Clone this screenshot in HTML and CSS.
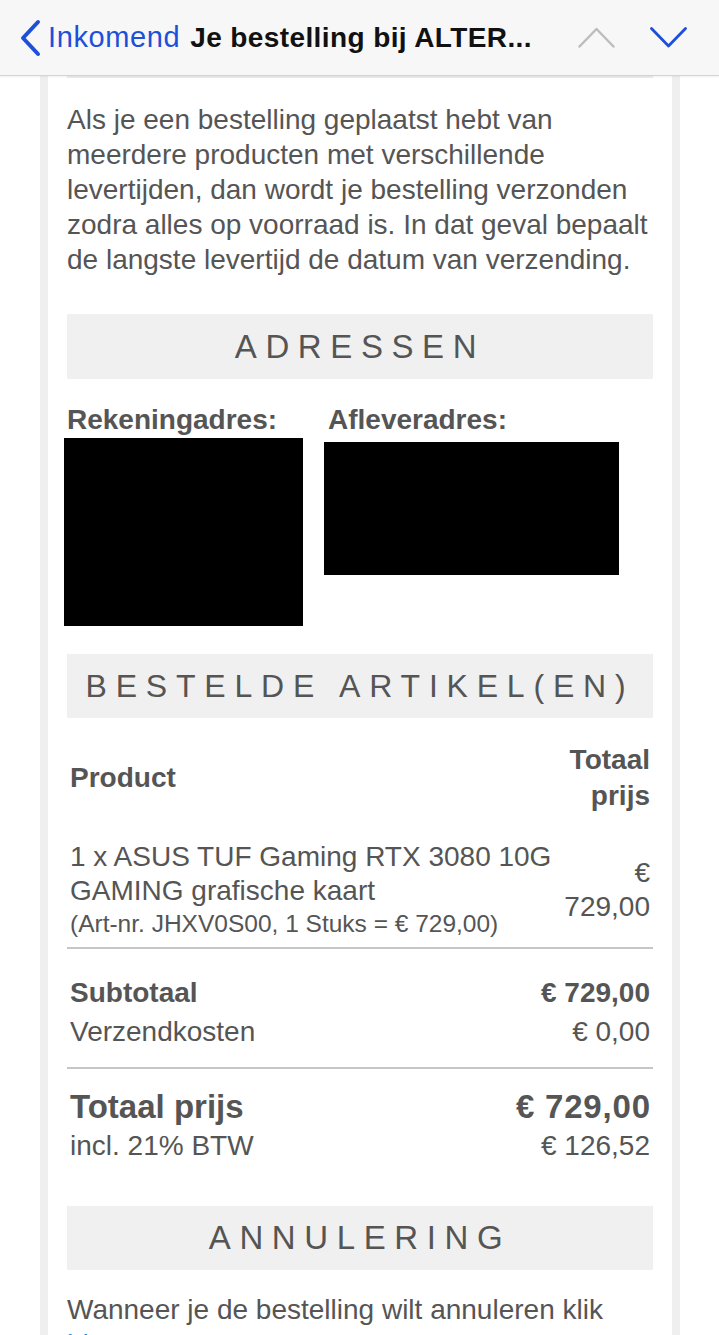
FILE: index.html
```html
<!DOCTYPE html>
<html lang="nl">
<head>
<meta charset="utf-8">
<title>Je bestelling bij ALTERNATE</title>
<link rel="stylesheet" href="styles.css">
</head>
<body>
<header class="topbar">
  <svg class="back-icon" width="24" height="38" viewBox="0 0 24 38" aria-hidden="true">
    <polyline points="20,3 5,19 20,35" fill="none" stroke="#1d50d9" stroke-width="4" stroke-linecap="round" stroke-linejoin="round"/>
  </svg>
  <span class="back-label">Inkomend</span>
  <span class="title">Je bestelling bij ALTER...</span>
  <nav class="nav-arrows">
    <svg width="37" height="21" viewBox="0 0 37 21" aria-hidden="true">
      <polyline points="1.5,19.5 18.5,2 35.5,19.5" fill="none" stroke="#bdbdbd" stroke-width="2.5" stroke-linecap="round" stroke-linejoin="round"/>
    </svg>
    <svg width="37" height="21" viewBox="0 0 37 21" aria-hidden="true">
      <polyline points="1.5,1.5 18.5,19 35.5,1.5" fill="none" stroke="#1d50d9" stroke-width="2.8" stroke-linecap="round" stroke-linejoin="round"/>
    </svg>
  </nav>
</header>

<main class="page">
  <div class="mail">
    <div class="content">
      <div class="top-rule"></div>
      <p class="text intro">Als je een bestelling geplaatst hebt van meerdere producten met verschillende levertijden, dan wordt je bestelling verzonden zodra alles op voorraad is. In dat geval bepaalt de langste levertijd de datum van verzending.</p>

      <h2 class="section-title adressen">ADRESSEN</h2>

      <div class="addresses">
        <div class="address-col">
          <div class="address-label">Rekeningadres:</div>
          <div class="redacted redacted-billing"></div>
        </div>
        <div class="address-col">
          <div class="address-label">Afleveradres:</div>
          <div class="redacted redacted-shipping"></div>
        </div>
      </div>

      <h2 class="section-title artikelen">BESTELDE ARTIKEL(EN)</h2>

      <div class="products">
        <div class="th th-product">Product</div>
        <div class="th th-price">Totaal prijs</div>
        <div class="item-desc">
          <div class="item-name">1 x ASUS TUF Gaming RTX 3080 10G GAMING grafische kaart</div>
          <div class="item-meta">(Art-nr. JHXV0S00, 1 Stuks = € 729,00)</div>
        </div>
        <div class="item-price">€ 729,00</div>
      </div>

      <div class="rule"></div>

      <div class="totals">
        <div class="total-row strong"><span>Subtotaal</span><span>€ 729,00</span></div>
        <div class="total-row"><span>Verzendkosten</span><span>€ 0,00</span></div>
      </div>

      <div class="rule rule-2"></div>

      <div class="grand">
        <div class="grand-row"><span>Totaal prijs</span><span class="grand-amount">€ 729,00</span></div>
        <div class="vat-row"><span>incl. 21% BTW</span><span>€ 126,52</span></div>
      </div>

      <h2 class="section-title annulering">ANNULERING</h2>

      <p class="text cancel">Wanneer je de bestelling wilt annuleren klik <a class="link" href="#">hier</a>.</p>
    </div>
  </div>
</main>
</body>
</html>
```

FILE: styles.css
```css
html, body {
  margin: 0;
  padding: 0;
  background: #ffffff;
}

body {
  font-family: "Liberation Sans", Arial, Helvetica, sans-serif;
  color: #555555;
  overflow: hidden;
}

/* ---------- top bar ---------- */
.topbar {
  height: 76px;
  box-sizing: border-box;
  display: flex;
  align-items: center;
  padding: 0 32px 0 18px;
  background: #f7f7f7;
  border-bottom: 1px solid #d4d4d4;
  box-shadow: 0 1px 2px rgba(0, 0, 0, 0.06);
  position: relative;
  z-index: 2;
}

.back-icon {
  flex: none;
}

.back-label {
  margin-left: 6px;
  font-size: 29px;
  letter-spacing: 0.6px;
  color: #1d50d9;
}

.title {
  margin-left: 10px;
  font-size: 28px;
  font-weight: bold;
  letter-spacing: 0.4px;
  color: #111111;
  white-space: nowrap;
}

.nav-arrows {
  margin-left: auto;
  display: flex;
  align-items: center;
  gap: 35px;
}

.nav-arrows svg {
  display: block;
}

/* ---------- page ---------- */
.page {
  padding: 0 39px 0 40px;
}

.mail {
  border-left: 8px solid #efefef;
  border-right: 8px solid #efefef;
  min-height: 1300px;
}

.content {
  padding: 0 19px;
}

.top-rule {
  height: 2px;
  background: #ececec;
}

.text {
  margin: 0;
  font-size: 28px;
  line-height: 35px;
  color: #555555;
}

.intro {
  margin-top: 24px;
}

.section-title {
  margin: 0;
  height: 65px;
  display: flex;
  align-items: center;
  justify-content: center;
  background: #f0f0f0;
  font-size: 33px;
  font-weight: normal;
  letter-spacing: 8.6px;
  color: #555555;
}

.adressen {
  margin-top: 37px;
}

.artikelen {
  margin-top: 28px;
  height: 64px;
  font-size: 32px;
  letter-spacing: 8.8px;
}

.annulering {
  margin-top: 41px;
  height: 64px;
}

/* ---------- addresses ---------- */
.addresses {
  margin-top: 23px;
  display: grid;
  grid-template-columns: 261px 1fr;
}

.address-label {
  font-size: 28px;
  line-height: 36px;
  font-weight: bold;
  color: #555555;
}

.redacted {
  background: #000000;
}

.redacted-billing {
  margin-left: -3px;
  width: 239px;
  height: 188px;
}

.redacted-shipping {
  margin-top: 4px;
  margin-left: -4px;
  width: 295px;
  height: 133px;
}

/* ---------- products ---------- */
.products {
  margin-top: 24px;
  display: grid;
  grid-template-columns: 1fr min-content;
  column-gap: 12px;
  row-gap: 26px;
  align-items: center;
  padding: 0 3px;
}

.th {
  font-size: 28px;
  line-height: 36px;
  font-weight: bold;
}

.th-price,
.item-price {
  text-align: right;
}

.item-name {
  font-size: 28px;
  line-height: 34px;
}

.item-meta {
  font-size: 24.5px;
  line-height: 32px;
}

.item-price {
  font-size: 28px;
  line-height: 34px;
}

.rule {
  margin-top: 7px;
  height: 2px;
  background: #c6c6c6;
}

.rule-2 {
  margin-top: 16px;
}

/* ---------- totals ---------- */
.totals {
  padding-top: 24px;
}

.total-row,
.grand-row,
.vat-row {
  display: flex;
  justify-content: space-between;
  padding: 0 3px;
  font-size: 28px;
  line-height: 39px;
}

.total-row.strong {
  font-weight: bold;
}

.grand {
  margin-top: 18px;
}

.grand-row {
  font-size: 33px;
  line-height: 40px;
  font-weight: bold;
}

.grand-amount {
  letter-spacing: 0.8px;
  margin-right: -0.8px;
}

.vat-row {
  line-height: 38px;
}

.cancel {
  margin-top: 22px;
}

.link {
  color: #1e90e6;
  text-decoration: none;
}
```
